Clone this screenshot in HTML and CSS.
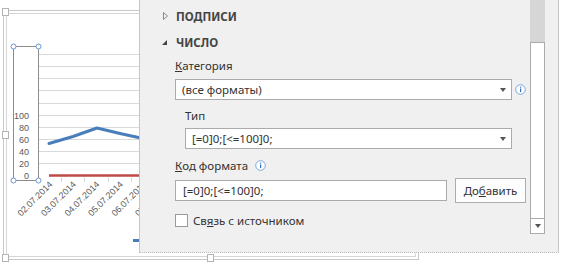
FILE: index.html
```html
<!DOCTYPE html>
<html>

<head>
    <title>Формат оси</title>
    <meta charset="utf-8">
    <link rel="stylesheet" href="styles.css">
</head>

<body>
    <div class="sheet">
        <svg class="chart" width="565" height="263" viewBox="0 0 565 263">
            <!-- рамка выделенной диаграммы -->
            <rect x="3.5" y="10.5" width="415" height="249" fill="none" stroke="#c8c8c8" />
            <rect x="6.5" y="13.5" width="409" height="243" fill="none" stroke="#d6d6d6" />
            <g fill="#fff" stroke="#b4b4b4">
                <rect x="2.5" y="8.5" width="6" height="7" />
                <rect x="2.5" y="131.5" width="6" height="7" />
                <rect x="2.5" y="254.5" width="6" height="7" />
                <rect x="207.5" y="254.5" width="6" height="7" />
            </g>

            <!-- сетка -->
            <g stroke="#d9d9d9">
                <line x1="38" y1="54.5" x2="420" y2="54.5" />
                <line x1="38" y1="66.5" x2="420" y2="66.5" />
                <line x1="38" y1="78.5" x2="420" y2="78.5" />
                <line x1="38" y1="90.5" x2="420" y2="90.5" />
                <line x1="38" y1="103.5" x2="420" y2="103.5" />
                <line x1="38" y1="115.5" x2="420" y2="115.5" />
                <line x1="38" y1="127.5" x2="420" y2="127.5" />
                <line x1="38" y1="139.5" x2="420" y2="139.5" />
                <line x1="38" y1="151.5" x2="420" y2="151.5" />
                <line x1="38" y1="163.5" x2="420" y2="163.5" />
                <line x1="61.5" y1="177" x2="61.5" y2="182" />
                <line x1="84.5" y1="177" x2="84.5" y2="182" />
                <line x1="108.5" y1="177" x2="108.5" y2="182" />
                <line x1="131.5" y1="177" x2="131.5" y2="182" />
            </g>

            <!-- выделенная вертикальная ось -->
            <rect x="13.5" y="46.5" width="25" height="134" fill="none" stroke="#8c8c8c" />
            <g class="axis-text" text-anchor="end">
                <text x="29" y="118.5">100</text>
                <text x="29" y="130.5">80</text>
                <text x="29" y="142.5">60</text>
                <text x="29" y="154.5">40</text>
                <text x="29" y="166.5">20</text>
                <text x="29" y="179">0</text>
            </g>
            <g fill="#fff" stroke="#6a96cf">
                <circle cx="13.5" cy="46.5" r="2.5" />
                <circle cx="38.5" cy="46.5" r="2.5" />
                <circle cx="13.5" cy="180.5" r="2.5" />
                <circle cx="38.5" cy="180.5" r="2.5" />
            </g>

            <!-- ряды -->
            <line x1="49" y1="175.5" x2="420" y2="175.5" stroke="#be4b48" stroke-width="2.5" />
            <polyline points="49,143.5 73,136.5 97,128 120,133.5 143,138.5 166,142 190,140" fill="none"
                stroke="#4a7ebb" stroke-width="3" stroke-linecap="round" stroke-linejoin="round" />

            <g class="axis-text" text-anchor="end">
                <text transform="translate(53 185) rotate(-45)">02.07.2014</text>
                <text transform="translate(76.5 185) rotate(-45)">03.07.2014</text>
                <text transform="translate(100 185) rotate(-45)">04.07.2014</text>
                <text transform="translate(123.5 185) rotate(-45)">05.07.2014</text>
                <text transform="translate(147 185) rotate(-45)">06.07.2014</text>
                <text transform="translate(170.5 185) rotate(-45)">07.07.2014</text>
            </g>

            <line x1="133" y1="240.5" x2="160" y2="240.5" stroke="#4a7ebb" stroke-width="3" />
        </svg>

        <aside class="pane">
            <div class="pane-body">
                <div class="group-head">
                    <svg class="twisty" width="15" height="10" viewBox="0 0 15 10">
                        <path d="M2.5 1.5 L6.5 5 L2.5 8.5 Z" fill="none" stroke="#8a8a8a" />
                    </svg>
                    ПОДПИСИ
                </div>
                <div class="group-head">
                    <svg class="twisty" width="15" height="10" viewBox="0 0 15 10">
                        <path d="M1 8 L6 3 L6 8 Z" fill="#444" />
                    </svg>
                    ЧИСЛО
                </div>

                <div class="group">
                    <div class="field-label"><u>К</u>атегория</div>
                    <div class="row">
                        <div class="select">
                            <span>(все форматы)</span>
                            <i class="caret"></i>
                        </div>
                        <svg class="info" width="11" height="11" viewBox="0 0 11 11">
                            <circle cx="5.5" cy="5.5" r="4.8" fill="#fff" stroke="#7aa6dc" />
                            <rect x="5" y="4.5" width="1.2" height="3.6" fill="#2f6fc0" />
                            <rect x="5" y="2.6" width="1.2" height="1.1" fill="#2f6fc0" />
                        </svg>
                    </div>

                    <div class="sub">
                        <div class="field-label">Тип</div>
                        <div class="select">
                            <span>[=0]0;[&lt;=100]0;</span>
                            <i class="caret"></i>
                        </div>
                    </div>

                    <div class="field-label">
                        <u>К</u>од формата
                        <svg class="info" width="11" height="11" viewBox="0 0 11 11">
                            <circle cx="5.5" cy="5.5" r="4.8" fill="#fff" stroke="#7aa6dc" />
                            <rect x="5" y="4.5" width="1.2" height="3.6" fill="#2f6fc0" />
                            <rect x="5" y="2.6" width="1.2" height="1.1" fill="#2f6fc0" />
                        </svg>
                    </div>
                    <div class="row code-row">
                        <div class="input">[=0]0;[&lt;=100]0;</div>
                        <button class="btn">До<u>б</u>авить</button>
                    </div>

                    <label class="check">
                        <span class="box"></span>
                        Св<u>я</u>зь с источником
                    </label>
                </div>
            </div>

            <div class="scrollbar">
                <div class="thumb"></div>
                <div class="track"></div>
                <div class="down"><i class="caret"></i></div>
            </div>
        </aside>
    </div>
</body>

</html>
```

FILE: styles.css
```css
body {
    margin: 0;
    padding: 0;
    background: #fff;
    font-family: "Noto Sans", "Open Sans", sans-serif;
    color: #333;
}

.sheet {
    position: relative;
    width: 565px;
    height: 263px;
    overflow: hidden;
}

.chart {
    display: block;
}

.axis-text {
    font-family: "Liberation Sans", sans-serif;
    font-size: 9px;
    fill: #595959;
}

/* панель формата поверх диаграммы */
.pane {
    position: absolute;
    left: 139px;
    top: 0;
    width: 418px;
    height: 252px;
    display: flex;
    background: #f0f0f0;
    border-left: 1px solid #c6c6c6;
    border-right: 1px solid #c6c6c6;
    border-bottom: 1px dotted #bdbdbd;
}

.pane-body {
    flex: 1;
    padding: 3px 4px 0 21px;
}

.group-head {
    display: flex;
    align-items: center;
    height: 26px;
    font-size: 11.5px;
    font-weight: bold;
    color: #444;
}

.twisty {
    flex: none;
}

.group {
    padding-left: 14px;
    padding-top: 2px;
}

.field-label {
    display: flex;
    align-items: center;
    height: 16px;
    font-size: 11.5px;
}

.field-label .info {
    margin-left: 7px;
}

.row {
    display: flex;
    align-items: center;
    margin-top: 6px;
}

.select {
    flex: 1;
    display: flex;
    align-items: center;
    height: 21px;
    box-sizing: border-box;
    padding: 0 5px 0 6px;
    background: #fff;
    border: 1px solid #ababab;
    font-size: 11.5px;
}

.select span {
    flex: 1;
}

.caret {
    display: block;
    width: 0;
    height: 0;
    border-left: 3px solid transparent;
    border-right: 3px solid transparent;
    border-top: 4px solid #555;
}

.info {
    flex: none;
    margin-left: 3px;
}

.sub {
    padding-left: 10px;
    margin-top: 7px;
}

.sub .select {
    margin-top: 5px;
    margin-right: 14px;
}

.sub + .field-label {
    margin-top: 8px;
}

.code-row {
    margin-top: 5px;
    gap: 8px;
}

.input {
    width: 272px;
    height: 21px;
    box-sizing: border-box;
    padding-left: 7px;
    line-height: 19px;
    background: #fff;
    border: 1px solid #ababab;
    font-size: 11.5px;
}

.btn {
    width: 71px;
    height: 25px;
    padding: 0;
    background: #fdfdfd;
    border: 1px solid #adadad;
    font-family: inherit;
    font-size: 11.5px;
    color: #333;
}

.check {
    display: flex;
    align-items: center;
    margin-top: 9px;
    height: 16px;
    font-size: 11.5px;
}

.check .box {
    width: 13px;
    height: 13px;
    box-sizing: border-box;
    margin-right: 5px;
    background: #fff;
    border: 1px solid #9a9a9a;
}

/* полоса прокрутки */
.scrollbar {
    flex: none;
    width: 15px;
    margin-right: 14px;
}

.thumb {
    height: 42px;
    background: #d6d6d6;
}

.track {
    height: 177px;
    box-sizing: border-box;
    background: #fff;
    border: 1px solid #ababab;
}

.down {
    display: flex;
    align-items: center;
    justify-content: center;
    height: 15px;
    box-sizing: border-box;
    background: #fff;
    border: 1px solid #ababab;
    border-top: none;
}
```
